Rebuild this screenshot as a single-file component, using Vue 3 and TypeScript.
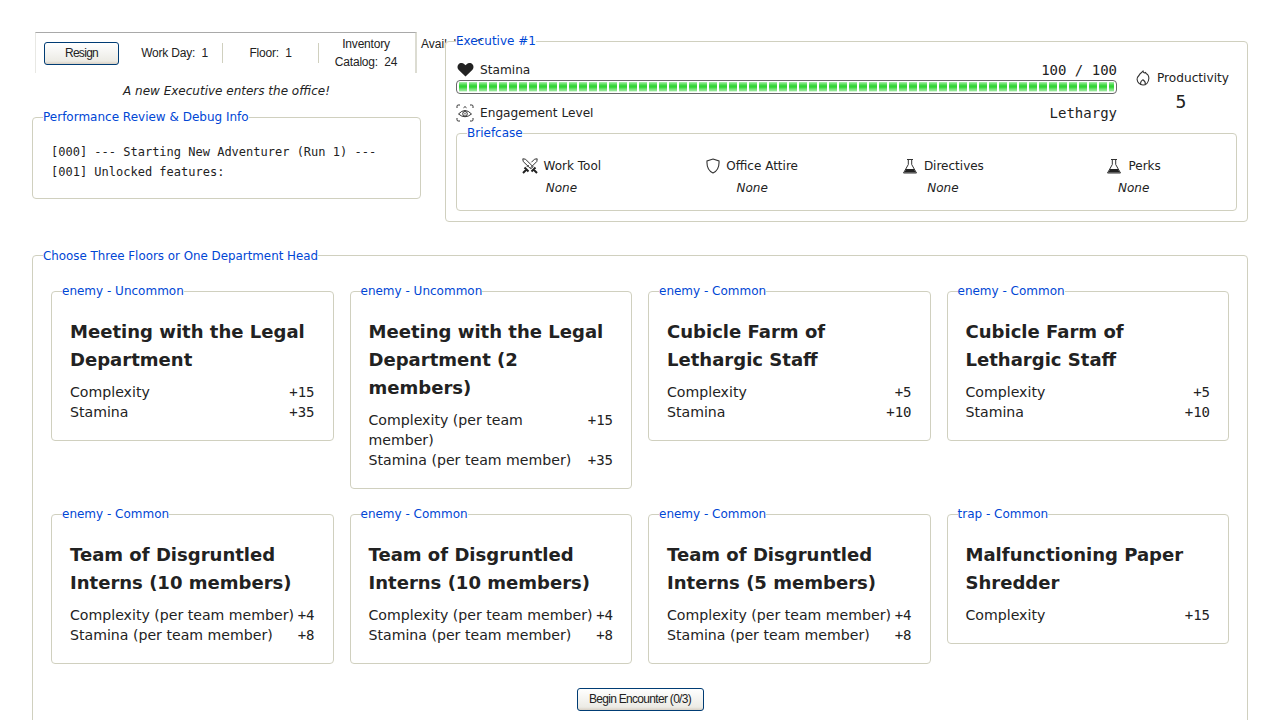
<script setup lang="ts">
interface Stat {
  label: string;
  value: string;
}

interface Floor {
  legend: string;
  title: string;
  stats: Stat[];
}

const slots = [
  { icon: 'swords', label: 'Work Tool' },
  { icon: 'shield', label: 'Office Attire' },
  { icon: 'flask', label: 'Directives' },
  { icon: 'flask', label: 'Perks' },
];

const interns = (size: number): Floor => ({
  legend: 'enemy - Common',
  title: `Team of Disgruntled Interns (${size} members)`,
  stats: [
    { label: 'Complexity (per team member)', value: '+4' },
    { label: 'Stamina (per team member)', value: '+8' },
  ],
});

const cubicles: Floor = {
  legend: 'enemy - Common',
  title: 'Cubicle Farm of Lethargic Staff',
  stats: [
    { label: 'Complexity', value: '+5' },
    { label: 'Stamina', value: '+10' },
  ],
};

const floors: Floor[] = [
  {
    legend: 'enemy - Uncommon',
    title: 'Meeting with the Legal Department',
    stats: [
      { label: 'Complexity', value: '+15' },
      { label: 'Stamina', value: '+35' },
    ],
  },
  {
    legend: 'enemy - Uncommon',
    title: 'Meeting with the Legal Department (2 members)',
    stats: [
      { label: 'Complexity (per team member)', value: '+15' },
      { label: 'Stamina (per team member)', value: '+35' },
    ],
  },
  cubicles,
  cubicles,
  interns(10),
  interns(10),
  interns(5),
  {
    legend: 'trap - Common',
    title: 'Malfunctioning Paper Shredder',
    stats: [{ label: 'Complexity', value: '+15' }],
  },
];
</script>

<template>
  <div class="page">
    <div class="top">
      <div class="left">
        <div class="toolbar">
          <button class="xp-btn resign">Resign</button>
          <div class="tool-stat day">Work Day:&nbsp; 1</div>
          <div class="tool-stat floor">Floor:&nbsp; 1</div>
          <div class="tool-stat catalog">Inventory<br />Catalog:&nbsp; 24</div>
          <div class="tool-over">Available: 0</div>
        </div>
        <p class="message">A new Executive enters the office!</p>
        <fieldset class="box log">
          <legend>Performance Review &amp; Debug Info</legend>
          <div>[000] --- Starting New Adventurer (Run 1) ---</div>
          <div>[001] Unlocked features:</div>
        </fieldset>
      </div>

      <fieldset class="box exec">
        <legend>Executive #1</legend>
        <div class="exec-main">
          <div class="vitals">
            <div class="vital-row stamina-row">
              <span class="vital-label">
                <svg class="heart" viewBox="0 0 18 16" width="17" height="15">
                  <path d="M9 15.500 1.800 8.600C.2 7 0 4.400 1.400 2.700 3 .7 6 .6 7.800 2.300L9 3.500l1.200-1.200C12 .6 15 .7 16.600 2.700c1.400 1.700 1.200 4.300-.4 5.900z" fill="#222" />
                </svg>
                Stamina
              </span>
              <span class="mono">100 / 100</span>
            </div>
            <div class="bar"><div class="bar-fill"></div></div>
            <div class="vital-row engage-row">
              <span class="vital-label">
                <svg viewBox="0 0 18 18" width="18" height="18" fill="none" stroke="#333" stroke-width="1">
                  <path d="M1 4V2.200Q1 1 2.200 1H4M14 1h1.800Q17 1 17 2.200V4M17 14v1.800q0 1.200-1.200 1.200H14M4 17H2.200Q1 17 1 15.800V14" />
                  <path d="M2.500 10Q9 3 15.500 10 9 15.500 2.500 10Z" />
                  <circle cx="9" cy="9.800" r="2.300" />
                  <circle cx="9" cy="9.800" r=".7" fill="#333" stroke="none" />
                  <path d="M7.500 3.800 9 2.600l1.500 1.200" />
                </svg>
                Engagement Level
              </span>
              <span class="mono">Lethargy</span>
            </div>
          </div>
          <div class="productivity">
            <span class="prod-label">
              <svg viewBox="0 0 14 16" width="14" height="16" fill="none" stroke="#333" stroke-width="1.100">
                <path d="M7 1.200c.4 1.800 1.500 2 2.600 1.400.2 1 1 1.400 2 1.900.9 1.200 1.400 2.700 1.200 4.200C12.500 12.500 10 15 7 15s-5.600-2.400-5.900-5.500C1 7.500 2 6.300 3.300 5 3.500 3.600 5.500 3 7 1.200Z" />
                <path d="M4.800 14.500c-.6-1.800.2-3.500 2.200-4.700 1.800 1.200 2.700 2.900 2.200 4.700" />
              </svg>
              Productivity
            </span>
            <span class="prod-value">5</span>
          </div>
        </div>

        <fieldset class="box briefcase">
          <legend>Briefcase</legend>
          <div class="slots">
            <div v-for="slot in slots" :key="slot.label" class="slot">
              <span class="slot-label">
                <svg v-if="slot.icon === 'swords'" viewBox="0 0 16 16" width="16" height="16" fill="none" stroke="#333" stroke-width="1">
                  <path d="M.8.800 3.500 1.200 11 8.700 8.800 10.900 1.200 3.500Z" />
                  <path d="M15.200.800 12.500 1.200 9.400 4.300M6.700 7l-1.900 1.900" />
                  <path d="M15.200.800 14.800 3.500 8.500 9.800" />
                  <path d="M2.500 9.500 6.500 13.500M13.500 9.500 9.500 13.500M4 12 1 15M12 12l3 3" stroke="#222" stroke-width="2" />
                </svg>
                <svg v-else-if="slot.icon === 'shield'" viewBox="0 0 14 16" width="14" height="16" fill="none" stroke="#333" stroke-width="1.100">
                  <path d="M7 1 13 3c.4 5.800-1.600 9.800-6 12C2.600 12.800.6 8.800 1 3Z" />
                </svg>
                <svg v-else viewBox="0 0 16 16" width="16" height="16" fill="none" stroke="#333" stroke-width="1">
                  <path d="M5 1.500h6M6.300 1.500v5L1.500 15h13L9.700 6.500v-5" />
                  <path d="M4.200 11h7.600l2 3.500H2.200z" fill="#222" stroke="none" />
                </svg>
                {{ slot.label }}
              </span>
              <em>None</em>
            </div>
          </div>
        </fieldset>
      </fieldset>
    </div>

    <fieldset class="box choose">
      <legend>Choose Three Floors or One Department Head</legend>
      <div class="floors">
        <fieldset v-for="(floor, i) in floors" :key="i" class="box card">
          <legend>{{ floor.legend }}</legend>
          <h3>{{ floor.title }}</h3>
          <div v-for="stat in floor.stats" :key="stat.label" class="card-stat">
            <span>{{ stat.label }}</span>
            <span class="card-val">{{ stat.value }}</span>
          </div>
        </fieldset>
      </div>
      <div class="actions">
        <button class="xp-btn begin">Begin Encounter (0/3)</button>
      </div>
    </fieldset>
  </div>
</template>

<style>
html,
body {
  margin: 0;
  overflow: hidden;
  background: #fff;
}
</style>

<style scoped>
.page {
  box-sizing: border-box;
  width: 1280px;
  padding: 32px 32px 24px;
  font-family: "DejaVu Sans", sans-serif;
  font-size: 12.16px;
  color: #222;
}

.top {
  display: flex;
  gap: 24px;
  align-items: flex-start;
  margin-bottom: 25px;
}

.left {
  width: 389px;
  flex: none;
}

.box {
  margin: 0;
  min-width: 0;
  border: 1px solid #d0d0bf;
  border-radius: 4px;
  background: #fff;
}

.box > legend {
  padding: 0;
  color: #0046d5;
  font-size: 12px;
  line-height: 18px;
}

.log > legend,
.choose > legend,
.card > legend {
  margin-left: -8px;
}

.choose > legend {
  font-size: 11.87px;
}

.briefcase > legend {
  margin-left: 1px;
}

.toolbar {
  display: flex;
  align-items: center;
  box-sizing: border-box;
  width: 382px;
  height: 41px;
  margin-left: 3px;
  padding-left: 8px;
  padding-right: 2px;
  border-top: 1px solid #a9a9a9;
  border-left: 1px solid #e8e8e4;
  border-right: 2px solid #dcdcd2;
  font-family: "Liberation Sans", Arial, sans-serif;
  font-size: 12px;
  letter-spacing: -0.2px;
  color: #222;
}

.xp-btn {
  box-sizing: border-box;
  height: 23px;
  padding: 0;
  border: 1px solid #003c74;
  border-radius: 3px;
  background: linear-gradient(180deg, #fff, #ecebe5 86%, #d8d0c4);
  font-family: "Liberation Sans", Arial, sans-serif;
  font-size: 12px;
  letter-spacing: -0.7px;
  color: #222;
}

.resign {
  width: 75px;
  flex: none;
}

.tool-stat {
  flex: none;
  box-sizing: border-box;
  text-align: center;
  white-space: nowrap;
}

.day {
  width: 104px;
  padding-left: 8px;
  border-right: 1px solid #d0d0bf;
  line-height: 20px;
}

.floor {
  width: 96px;
  border-right: 1px solid #d0d0bf;
  line-height: 20px;
}

.catalog {
  width: 94px;
  line-height: 18px;
}

.tool-over {
  flex: none;
  margin-left: 8px;
  transform: translateY(-9px);
  white-space: nowrap;
  letter-spacing: 0;
}

.message {
  margin: 11px 0 9px;
  font-size: 12px;
  font-style: italic;
  line-height: 15px;
  text-align: center;
}

.log {
  padding: 15.5px 18px 16px;
  font-family: "DejaVu Sans Mono", monospace;
  font-size: 12px;
  line-height: 20px;
}

.log > legend {
  font-family: "DejaVu Sans", sans-serif;
}

.exec {
  position: relative;
  flex: 1;
  padding: 9.5px 10px 10px;
}

.exec-main {
  display: flex;
}

.vitals {
  flex: 1;
  min-width: 0;
}

.vital-row {
  display: flex;
  justify-content: space-between;
  align-items: center;
}

.vital-label {
  display: flex;
  align-items: center;
  gap: 6px;
}

.heart {
  margin-left: 1px;
}

.mono {
  font-family: "DejaVu Sans Mono", monospace;
  font-size: 14px;
}

.bar {
  box-sizing: border-box;
  height: 14px;
  padding: 1px 2px;
  border: 1px solid #686868;
  border-radius: 4px;
  background: #fff;
}

.bar-fill {
  height: 100%;
  background:
    repeating-linear-gradient(to right, transparent 0, transparent 8px, #fff 8px, #fff 10px),
    linear-gradient(to bottom, #acedad 0, #7be47d 14%, #4cda50 28%, #2ed330 42%, #42d845 57%, #76e275 71%, #8fe791 85%, #fff 100%);
}

.stamina-row {
  height: 20px;
}

.engage-row {
  height: 20px;
  margin-top: 9px;
}

.productivity {
  display: flex;
  flex-direction: column;
  align-items: center;
  width: 112px;
  margin-left: 8px;
  flex: none;
}

.prod-label {
  display: flex;
  align-items: center;
  gap: 7px;
  margin-top: 10px;
  margin-left: 3px;
}

.prod-value {
  margin-top: 5px;
  font-family: "DejaVu Sans Mono", monospace;
  font-size: 18px;
  line-height: 22px;
}

.briefcase {
  padding: 15.5px 7px 14px 9px;
  margin-top: 1.5px;
}

.slots {
  display: grid;
  grid-template-columns: repeat(4, 1fr);
}

.slot {
  display: flex;
  flex-direction: column;
  align-items: center;
  gap: 6px;
  font-size: 12px;
}

.slot-label {
  display: flex;
  align-items: center;
  gap: 6px;
  height: 16px;
}

.slot em {
  line-height: 16px;
}

.choose {
  padding: 17.5px 18px 24px;
}

.floors {
  display: grid;
  grid-template-columns: repeat(4, 1fr);
  gap: 16px;
  align-items: start;
}

.card {
  padding: 12px 18px 18px;
  font-size: 14.13px;
  line-height: 20px;
}

.card h3 {
  margin: 5.5px 0 8.5px;
  font-size: 18.05px;
  font-weight: 700;
  line-height: 28px;
}

.card-stat {
  display: flex;
  justify-content: space-between;
  gap: 2px;
}

.card-val {
  flex: none;
  font-family: "DejaVu Sans Mono", monospace;
  font-size: 14px;
}

.actions {
  display: flex;
  justify-content: center;
  margin-top: 23.5px;
}

.begin {
  width: 127px;
}
</style>
